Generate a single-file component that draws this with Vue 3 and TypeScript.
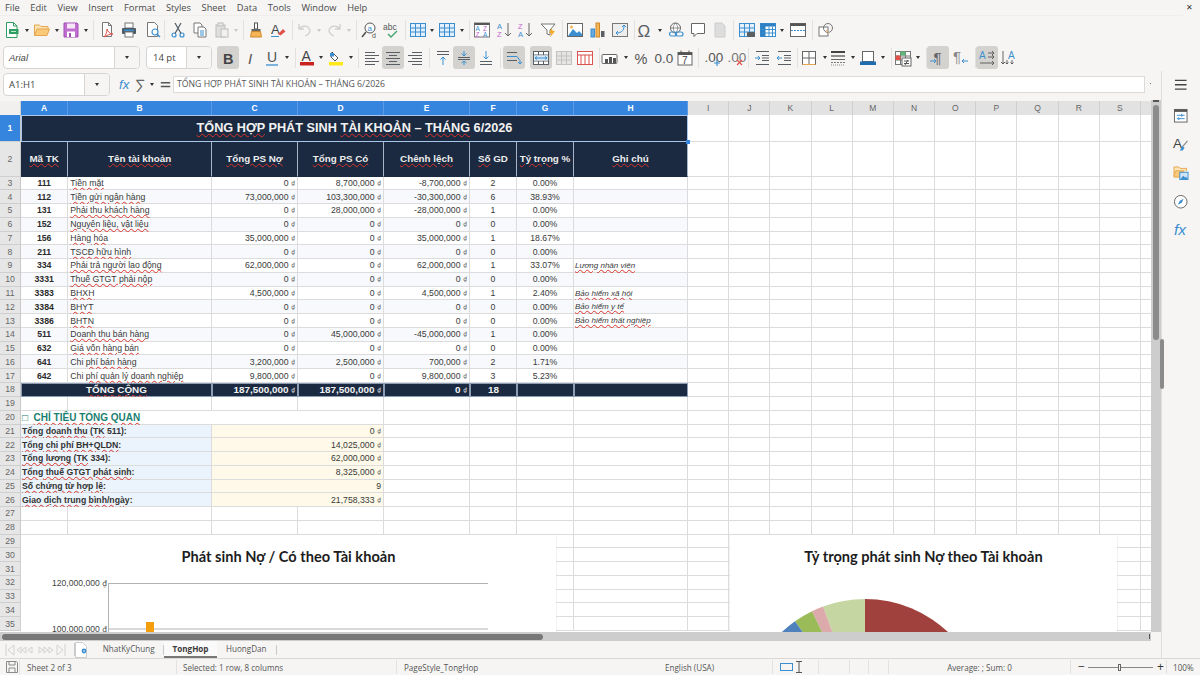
<script setup lang="ts">
import { h } from 'vue';

// "a |b| c" -> the part between bars gets the spell-check squiggle
const Sq = (props: { t: string }) =>
  h('span', null, props.t.split('|').map((p, i) => h('span', { class: i % 2 ? 'sp' : undefined }, p)));
Sq.props = ['t'];

const BL = '#3b8fd0';
const DK = '#5a5f66';
const txt = (x: number, y: number, s: number, fill: string, t: string, extra = '') =>
  `<text x="${x}" y="${y}" font-size="${s}" fill="${fill}" font-family="Liberation Sans, sans-serif" ${extra}>${t}</text>`;
const lines = (ys: number[], x1: number, x2: number, c = DK) =>
  `<path d="${ys.map((y) => `M${x1} ${y}H${x2}`).join('')}" stroke="${c}" fill="none"/>`;
const grid = (c: string, fill = '#fff') =>
  `<rect x=".5" y="1.5" width="15" height="13" fill="${fill}" stroke="${c}"/><path d="M.5 6h15M.5 10h15M5.5 1.5v13M10.5 1.5v13" stroke="${c}"/>`;

const icons: Record<string, string> = {
  new: `<path d="M2.5.5h7l3.5 3.5v11.5H2.5z" fill="#fff" stroke="#2f9e63"/><path d="M9.5.5V4H13" fill="none" stroke="#2f9e63"/><rect x="5" y="7" width="9.5" height="5" fill="#2f9e63"/><path d="M7 9.5h5" stroke="#bfe6cf"/>`,
  open: `<path d="M.5 13V3h5L7 4.5h7V7" fill="#fce3b5" stroke="#e5a64e"/><path d="M.5 13.5 3 7h12.5L13 13.5z" fill="#fbc97a" stroke="#e5a64e"/>`,
  save: `<path d="M1 1h13l1 1v13H1z" fill="#c06fd0" stroke="#a24fb4"/><rect x="4" y="1.5" width="8" height="5" fill="#f6e6f8"/><rect x="4" y="9.5" width="8" height="5.5" fill="#fff"/><rect x="6" y="11" width="2" height="4" fill="#a24fb4"/>`,
  pdf: `<path d="M3.5.5h6l3 3v11h-9z" fill="#fff" stroke="#777"/><path d="M9.5.5v3h3" fill="none" stroke="#777"/><path d="M5 15c2-2 3-5 3-8 1 3 3 5 6 5-3 0-6 1-9 3z" fill="none" stroke="#e0534a"/>`,
  print: `<rect x="4" y="1" width="8" height="5" fill="#fff" stroke="#777"/><rect x="1" y="6" width="14" height="6" rx="1" fill="#4d5a66"/><rect x="4" y="10" width="8" height="5" fill="#fff" stroke="#777"/><rect x="3" y="7.5" width="10" height="1.5" fill="${BL}"/>`,
  preview: `<path d="M2.5.5h7l3 3v11h-10z" fill="#fff" stroke="#777"/><circle cx="10" cy="10" r="3" fill="#fff" stroke="${BL}" stroke-width="1.2"/><path d="M12 12l3 3" stroke="${BL}" stroke-width="1.4"/>`,
  cut: `<circle cx="4" cy="13" r="2" fill="none" stroke="${BL}" stroke-width="1.2"/><circle cx="12" cy="13" r="2" fill="none" stroke="${BL}" stroke-width="1.2"/><path d="M5 11.5 11 1M11 11.5 5 1" stroke="#4d5a66" stroke-width="1.2"/>`,
  copy: `<path d="M2 1h6l2 2v8H2z" fill="#fff" stroke="#777"/><path d="M6 5h6l2 2v8H6z" fill="#fff" stroke="#777"/><path d="M8 9h4M8 11h4M8 13h4" stroke="${BL}"/>`,
  paste: `<g opacity=".5"><rect x="2" y="3" width="9" height="12" fill="#ccc" stroke="#888"/><rect x="4" y="1" width="5" height="3" fill="#ddd" stroke="#888"/><rect x="7" y="7" width="7" height="8" fill="#eee" stroke="#888"/></g>`,
  clone: `<rect x="6.5" y="1" width="3" height="6" fill="#fff" stroke="#555"/><rect x="3.5" y="7" width="9" height="2.5" fill="#666"/><path d="M3.5 9.5h9l1 5.5h-11z" fill="#f5b455" stroke="#d08a2a"/>`,
  clearfmt: `${txt(1, 12, 13, '#444', 'A')}<path d="M1 14.5h8" stroke="${BL}"/><path d="M8 12l5-5 2.5 2.5-5 4z" fill="#e0534a"/>`,
  undo: `<path d="M3 2v5h5M3 7c3-4 9-4 11 1 0 3-2 5-5 6" fill="none" stroke="#cfcfcf" stroke-width="1.3"/>`,
  redo: `<path d="M13 2v5H8M13 7C10 3 4 3 2 8c0 3 2 5 5 6" fill="none" stroke="#cfcfcf" stroke-width="1.3"/>`,
  find: `<circle cx="9" cy="6" r="5" fill="#fff" stroke="#555"/>${txt(6.5, 8.5, 8, BL, 'a')}<path d="M5 10 1 15" stroke="#555" stroke-width="1.6"/>${txt(11, 16, 7, '#555', 'd')}`,
  spell: `${txt(0, 8, 8.5, '#555', 'abc')}<path d="M5 12l3 3 6-6" stroke="#41a36b" stroke-width="1.4" fill="none"/>`,
  table: grid(BL, '#e3effa'),
  grid: grid(BL, '#e3effa'),
  sort: `<rect x=".5" y="1" width="15" height="14" fill="#fff" stroke="#777"/><rect x=".5" y="1" width="15" height="2" fill="#555"/>${txt(1.5, 9, 6.5, BL, 'A')}${txt(9, 9, 6.5, '#c564cc', 'Z')}${txt(1.5, 15, 6.5, '#c564cc', 'Z')}${txt(9, 15, 6.5, BL, 'A')}`,
  az: `${txt(0, 7, 7.5, BL, 'A')}${txt(0, 15, 7.5, '#c564cc', 'Z')}<path d="M11 1v13M8 11l3 3 3-3" stroke="#666" fill="none"/>`,
  za: `${txt(0, 7, 7.5, '#c564cc', 'Z')}${txt(0, 15, 7.5, BL, 'A')}<path d="M11 1v13M8 11l3 3 3-3" stroke="#666" fill="none"/>`,
  filter: `<path d="M1 2h14l-5 6v5l-3-1V8z" fill="#fff" stroke="#777"/><path d="M12 6 9 11h2.5L10 15.5 15 9h-2.5z" fill="#f5a623"/>`,
  image: `<rect x=".5" y="1.5" width="15" height="13" fill="#fff" stroke="#666"/><path d="M1 14 6 7l4 4 2-2 3 3v2z" fill="${BL}"/><circle cx="4.5" cy="5" r="1.5" fill="#f5b455"/>`,
  chart: `<rect x="1" y="7" width="3.5" height="8" fill="#6aa9dc" stroke="${BL}"/><rect x="6" y="1" width="3.5" height="14" fill="#f5b455" stroke="#d08a2a"/><rect x="11" y="9" width="3.5" height="6" fill="#5a5f66"/>`,
  pivot: `<rect x=".5" y="1.5" width="15" height="13" fill="#eee" stroke="#777"/><path d="M4 11c5 0 8-2 8-7M10 5l2-2 2 2M6 9l-2 2 2 2" fill="none" stroke="${BL}"/>`,
  omega: txt(0.5, 14.5, 17, '#5a5f66', 'Ω'),
  link: `<circle cx="7.5" cy="6" r="5" fill="#fff" stroke="#666"/><path d="M2.5 6h10M7.5 1c-3 3-3 7 0 10M7.5 1c3 3 3 7 0 10" fill="none" stroke="#666" stroke-width=".7"/><rect x="1.5" y="10" width="7" height="4" rx="2" fill="none" stroke="${BL}" stroke-width="1.2"/><rect x="7.5" y="10" width="7.5" height="4" rx="2" fill="none" stroke="${BL}" stroke-width="1.2"/>`,
  comment: `<path d="M1.5 1.5h13v10H7l-3 3v-3H1.5z" fill="#fff" stroke="#666"/>`,
  hdoc: `<path d="M3 1h7l3 3v11H3z" fill="#ddd" stroke="#ccc"/>`,
  parea: `${grid(BL, '#e6f0fa')}<rect x="8" y="10" width="8" height="5" rx="1" fill="#5a5f66"/>`,
  freeze: `<rect x=".5" y="1.5" width="15" height="13" fill="#fff" stroke="${BL}"/><rect x=".5" y="1.5" width="5" height="13" fill="#2f7fc4"/><rect x=".5" y="1.5" width="15" height="3" fill="#2f7fc4"/><path d="M.5 7.5h15M.5 11h15M9 4.5v10M12.5 4.5v10" stroke="${BL}"/>`,
  split: `<rect x=".5" y="1.5" width="15" height="13" fill="#fff" stroke="#666"/><rect x=".5" y="1.5" width="15" height="2.5" fill="#555"/><path d="M1 8.5h14" stroke="${BL}" stroke-dasharray="2 1"/>`,
  shapes: `<rect x="1" y="5" width="9" height="9" fill="#fff" stroke="#777"/><circle cx="10" cy="6" r="4.5" fill="none" stroke="#777"/><path d="M8 8l3 3" stroke="#e5a64e"/>`,
  bold: txt(3, 13.5, 14.5, '#444', 'B', 'font-weight="700"'),
  italic: txt(5, 13.5, 15, '#555', 'I', 'font-family="Liberation Serif" font-style="italic"'),
  under: `${txt(3, 12, 14, '#555', 'U')}<path d="M2 15h12" stroke="${BL}" stroke-width="1.3"/>`,
  fcolor: `${txt(2.5, 11, 14, '#444', 'A')}<rect x="1" y="12" width="14" height="3.5" fill="#c9211e"/>`,
  hcolor: `<path d="M4 2l6 6-3 3-4-4z" fill="#fff" stroke="#555"/><rect x="2" y="3" width="4" height="3.5" fill="${BL}"/><rect x="1" y="12" width="14" height="3.5" fill="#ffe81a"/>`,
  aleft: lines([2.5, 8.5, 14.5], 1, 11) + lines([5.5, 11.5], 1, 15),
  acenter: lines([2.5, 8.5, 14.5], 1, 15) + lines([5.5, 11.5], 4, 12),
  aright: lines([2.5, 8.5, 14.5], 5, 15) + lines([5.5, 11.5], 1, 15),
  vtop: lines([1.5, 4.5], 2, 14) + `<path d="M8 15V7M5.5 9.5 8 7l2.5 2.5" fill="none" stroke="${BL}"/>`,
  vmid: lines([7.5, 9.5], 2, 14) + `<path d="M8 1v5M5.5 3.5 8 6l2.5-2.5M8 15v-4M5.5 13 8 11l2.5 2" fill="none" stroke="${BL}"/>`,
  vbot: lines([11.5, 14.5], 2, 14) + `<path d="M8 1v8M5.5 6.5 8 9l2.5-2.5" fill="none" stroke="${BL}"/>`,
  wrap: lines([2.5, 6.5, 10.5], 1, 11) + `<path d="M2 6.5h9l3 4v3M12 12l2 2 2-2" fill="none" stroke="${BL}"/>`,
  merge: `<rect x=".5" y="1.5" width="15" height="13" fill="#fff" stroke="${DK}"/><path d="M.5 5h15M.5 11h15M5.5 1.5V5M10.5 1.5V5M5.5 11v3.5M10.5 11v3.5" stroke="${DK}"/><rect x="1" y="5.5" width="14" height="5" fill="#d8e9f8"/><path d="M2 8h12M2 8l2-1.5M2 8l2 1.5M14 8l-2-1.5M14 8l-2 1.5" stroke="${BL}" fill="none"/>`,
  unmerge: `<g opacity=".4">${grid('#777', '#ccc')}</g>`,
  tsplit: `<rect x=".5" y="1.5" width="15" height="13" fill="#fff" stroke="#d9534f"/><path d="M.5 5h15M4 5v9M8 5v9M12 5v9" stroke="#d9534f"/>`,
  curr: `<rect x="0" y="4.5" width="15" height="9" rx="1" fill="#fff" stroke="#666"/><rect x="3" y="9" width="3" height="4" fill="#555"/><rect x="7" y="7" width="3" height="6" fill="#555"/><rect x="11" y="8" width="3" height="5" fill="#555"/>`,
  pct: txt(1.5, 13.5, 14.5, '#555', '%'),
  num: txt(-.5, 13, 13.5, '#555', '0.0'),
  date: `<rect x="1" y="2.5" width="14" height="12.5" fill="#fff" stroke="#666"/><rect x="1" y="2.5" width="14" height="2.5" fill="#555"/><path d="M4 .5v3M12 .5v3" stroke="#555"/>${txt(5, 14, 10, '#444', '7')}`,
  adddec: `${txt(-.5, 12, 13.5, '#555', '.00')}<path d="M12 10v6M9 13h6" stroke="${BL}" stroke-width="1.2"/>`,
  deldec: `${txt(-.5, 12, 13.5, '#777', '.00')}<path d="M9 10l5 5M14 10l-5 5" stroke="#e0534a" stroke-width="1.2"/>`,
  indent: lines([1.5, 14.5], 2, 15) + lines([5.5, 8, 10.5], 8, 15) + `<path d="M1 8h5M4 6l2 2-2 2" fill="none" stroke="${BL}"/>`,
  outdent: lines([1.5, 14.5], 2, 15) + lines([5.5, 8, 10.5], 8, 15) + `<path d="M6 8H1M3 6 1 8l2 2" fill="none" stroke="${BL}"/>`,
  border: `<rect x="1.5" y="1.5" width="13" height="13" fill="#fff" stroke="#666"/><path d="M8 1.5v13M1.5 8h13" stroke="#666"/><path d="M1.5 14.5h13" stroke="#e5a64e"/>`,
  bstyle: `<path d="M1 2h14" stroke="#444" stroke-width="2"/><path d="M1 6h14" stroke="#555" stroke-width="1.3"/><path d="M1 9.5h14" stroke="#666"/><path d="M1 12.5h14" stroke="#777" stroke-dasharray="2 1"/><path d="M1 15h14" stroke="#888" stroke-dasharray="1 1"/>`,
  bcolor: `<rect x="2.5" y="1.5" width="11" height="10" fill="#fff" stroke="#666"/><rect x="0" y="11.5" width="16" height="3.5" fill="#1f6cb0"/>`,
  cond: `${grid('#777', '#fff')}<rect x=".5" y="5.5" width="5" height="4.5" fill="#e0534a"/><rect x="5.5" y="1.5" width="5" height="4" fill="#5fb878"/><rect x="7" y="8" width="9" height="8" fill="#fff" stroke="#666"/><path d="M9 11h5M9 13.5h5M10 15l3-5" stroke="#555"/>`,
  ltr: `${txt(3.5, 13, 15, '#666', '¶')}<path d="M0 11h6M4 9l2 2-2 2" fill="none" stroke="${BL}"/>`,
  rtl: `${txt(0, 12, 15, '#888', '¶')}<path d="M15 11H9M11 9l-2 2 2 2" fill="none" stroke="${BL}"/>`,
  hdir: `${txt(0, 9, 10, BL, 'A')}<path d="M9 3h6M13 1l2 2-2 2M9 7h6M13 5l2 2-2 2M1 13h14M13 11l2 2-2 2" fill="none" stroke="#555" stroke-width=".9"/>`,
  vdir: `${txt(7, 9, 10, BL, 'A')}<path d="M2 1v13M0 12l2 2 2-2M6 10v4M4.5 12.5 6 14l1.5-1.5M11 10v4M9.5 12.5 11 14l1.5-1.5" fill="none" stroke="#555" stroke-width=".9"/>`,
  fx: `${txt(0, 13, 14, BL, 'fx', 'font-family="Liberation Serif" font-style="italic"')}`,
  sum: txt(2, 14, 16, '#666', '∑'),
  eq: `<path d="M3 6h10M3 10h10" stroke="#555" stroke-width="1.6"/>`,
  menu: `<path d="M2 3.5h12M2 8h12M2 12.5h12" stroke="#444" stroke-width="1.3"/>`,
  props: `<rect x="1.5" y="1.5" width="13" height="13" fill="#fff" stroke="#666"/><rect x="1.5" y="1.5" width="13" height="2.5" fill="#555"/><path d="M4 7.5h8M4 11h8" stroke="${BL}"/><path d="M9 6v3M6 9.5v3" stroke="${BL}"/>`,
  styles: `${txt(0, 12, 14, '#444', 'A')}<path d="M15 5l-6 7" stroke="#888" stroke-width="1.2"/><path d="M9.5 10.5 7 15h3l2-3z" fill="${BL}"/>`,
  gallery: `<path d="M1 12V2h5l1.5 1.5H14V6" fill="#fce3b5" stroke="#e5a64e"/><path d="M1 12.5 2.5 6H11v6.5z" fill="#fbc97a" stroke="#e5a64e"/><rect x="7" y="7.5" width="8.5" height="7.5" fill="#cfe3f5" stroke="${BL}"/><path d="M7.5 15l3-4 2 2 1-1 2 3z" fill="${BL}"/>`,
  nav: `<circle cx="8" cy="8" r="6.5" fill="#fff" stroke="#666"/><path d="M11 5 9 9 5 11l2-4z" fill="${BL}"/>`,
  fxs: txt(1, 13.5, 16, BL, 'fx', 'font-family="Liberation Serif" font-style="italic"'),
};

type Tool = [string, number, number?];
const widths: Record<string, number> = { '^': 8, '~': 8, '|': 1 };

// x is the centre of the item in the bar, turned into a flow gap from the previous item
function place(items: Tool[], start: number) {
  let right = start;
  return items.map(([name, x, active]) => {
    const w = widths[name] ?? 22;
    const gap = x - w / 2 - right;
    right = x + w / 2;
    return { name, active: !!active, w, gap };
  });
}

const bar1 = place([
  ['new', 12], ['^', 27], ['open', 42], ['^', 57], ['save', 71], ['^', 86], ['|', 93],
  ['pdf', 107], ['print', 129], ['preview', 153], ['|', 164], ['cut', 178], ['copy', 200],
  ['paste', 222], ['~', 236], ['|', 243], ['clone', 256], ['clearfmt', 278], ['|', 292],
  ['undo', 304], ['~', 319], ['redo', 335], ['~', 349], ['|', 356], ['find', 369], ['spell', 391],
  ['|', 405], ['table', 418], ['^', 432], ['grid', 447], ['^', 462], ['|', 469], ['sort', 482],
  ['az', 505], ['za', 526], ['filter', 548], ['|', 562], ['image', 575], ['chart', 598],
  ['pivot', 620], ['|', 634], ['omega', 645], ['^', 660], ['link', 676], ['comment', 698],
  ['hdoc', 720], ['|', 733], ['parea', 747], ['freeze', 768], ['^', 782], ['split', 798],
  ['|', 812], ['shapes', 826],
], 0);

const bar2 = place([
  ['bold', 228, 1], ['italic', 251], ['under', 272], ['^', 287], ['|', 295], ['fcolor', 307],
  ['^', 321], ['hcolor', 336], ['^', 351], ['|', 358], ['aleft', 372], ['acenter', 393, 1],
  ['aright', 415], ['|', 429], ['vtop', 443], ['vmid', 464, 1], ['vbot', 486], ['|', 500],
  ['wrap', 514, 1], ['merge', 541, 1], ['unmerge', 564], ['tsplit', 585], ['|', 599],
  ['curr', 610], ['^', 626], ['pct', 641], ['num', 663], ['date', 685], ['|', 698],
  ['adddec', 713], ['deldec', 736], ['|', 748], ['indent', 762], ['outdent', 784], ['|', 797],
  ['border', 809], ['^', 825], ['bstyle', 838], ['^', 853], ['bcolor', 868], ['^', 883],
  ['|', 891], ['cond', 903], ['^', 918], ['|', 926], ['ltr', 938, 1], ['rtl', 961], ['|', 975],
  ['hdir', 987, 1], ['vdir', 1009],
], 212);

const menus = ['File', 'Edit', 'View', 'Insert', 'Format', 'Styles', 'Sheet', 'Data', 'Tools', 'Window', 'Help'];
const sideIcons = ['props', 'styles', 'gallery', 'nav', 'fxs'];
const letters = 'ABCDEFGHIJKLMNOPQRS'.split('');
const headers = ['|Mã TK|', '|Tên tài khoản|', '|Tổng PS Nợ|', '|Tổng PS Có|', '|Chênh lệch|', '|Số| GD', '|Tỷ trọng| %', '|Ghi chú|'];

type Row = [string, string, string, string, string, string, string, string?];
const accounts: Row[] = [
  ['111', '|Tiền mặt|', '0', '8,700,000', '-8,700,000', '2', '0.00%'],
  ['112', '|Tiền gửi ngân hàng|', '73,000,000', '103,300,000', '-30,300,000', '6', '38.93%'],
  ['131', '|Phải thu khách hàng|', '0', '28,000,000', '-28,000,000', '1', '0.00%'],
  ['152', '|Nguyên liệu, vật liệu|', '0', '0', '0', '0', '0.00%'],
  ['156', '|Hàng hóa|', '35,000,000', '0', '35,000,000', '1', '18.67%'],
  ['211', '|TSCĐ hữu hình|', '0', '0', '0', '0', '0.00%'],
  ['334', '|Phải trả người lao động|', '62,000,000', '0', '62,000,000', '1', '33.07%', '|Lương nhân viên|'],
  ['3331', '|Thuế GTGT phải nộp|', '0', '0', '0', '0', '0.00%'],
  ['3383', '|BHXH|', '4,500,000', '0', '4,500,000', '1', '2.40%', '|Bảo hiểm xã hội|'],
  ['3384', '|BHYT|', '0', '0', '0', '0', '0.00%', '|Bảo hiểm y tế|'],
  ['3386', '|BHTN|', '0', '0', '0', '0', '0.00%', '|Bảo hiểm thất nghiệp|'],
  ['511', '|Doanh thu bán hàng|', '0', '45,000,000', '-45,000,000', '1', '0.00%'],
  ['632', '|Giá vốn hàng bán|', '0', '0', '0', '0', '0.00%'],
  ['641', 'Chi |phí bán hàng|', '3,200,000', '2,500,000', '700,000', '2', '1.71%'],
  ['642', 'Chi |phí quản lý doanh nghiệp|', '9,800,000', '0', '9,800,000', '3', '5.23%'],
];

const kpis: [string, string, boolean][] = [
  ['|Tổng doanh thu| (|TK| 511):', '0', true],
  ['|Tổng chi phí BH+QLDN|:', '14,025,000', true],
  ['|Tổng lương| (|TK| 334):', '62,000,000', true],
  ['|Tổng thuế GTGT phát sinh|:', '8,325,000', true],
  ['|Số chứng từ hợp lệ|:', '9', false],
  ['|Giao dịch trung bình/ngày|:', '21,758,333', true],
];

const statusCells = [
  { w: 20, icon: true },
  { w: 157, text: 'Sheet 2 of 3', pad: 7 },
  { w: 220, text: 'Selected: 1 row, 8 columns', pad: 6 },
  { w: 251, text: 'PageStyle_TongHop', pad: 7 },
  { w: 125, text: 'English (USA)', pad: 17 },
];
</script>

<template>
  <div class="app">
    <nav class="menubar">
      <span v-for="m in menus" :key="m">{{ m }}</span>
      <span class="close">✕</span>
    </nav>

    <div class="toolbar tb1">
      <template v-for="(t, i) in bar1" :key="i">
        <i v-if="t.name === '|'" class="sep" :style="{ marginLeft: t.gap + 'px' }"></i>
        <i v-else-if="t.name === '^' || t.name === '~'" class="caret" :class="{ off: t.name === '~' }" :style="{ marginLeft: t.gap + 'px' }"></i>
        <span v-else class="tool" :style="{ marginLeft: t.gap + 'px' }">
          <svg viewBox="0 0 16 16" v-html="icons[t.name]"></svg>
        </span>
      </template>
    </div>

    <div class="toolbar tb2">
      <div class="combo font"><em>Arial</em><b class="drop"><i class="caret"></i></b></div>
      <div class="combo size"><span>14 pt</span><b class="drop"><i class="caret"></i></b></div>
      <template v-for="(t, i) in bar2" :key="i">
        <i v-if="t.name === '|'" class="sep" :style="{ marginLeft: t.gap + 'px' }"></i>
        <i v-else-if="t.name === '^'" class="caret" :style="{ marginLeft: t.gap + 'px' }"></i>
        <span v-else class="tool" :class="{ active: t.active }" :style="{ marginLeft: t.gap + 'px' }">
          <svg viewBox="0 0 16 16" v-html="icons[t.name]"></svg>
        </span>
      </template>
    </div>

    <div class="workspace">
      <div class="main">
        <div class="formula">
          <div class="combo namebox"><span>A1:H1</span><b class="drop"><i class="caret"></i></b></div>
          <svg class="fx" viewBox="0 0 16 16" v-html="icons.fx"></svg>
          <svg class="sum" viewBox="0 0 16 16" v-html="icons.sum"></svg>
          <i class="caret"></i>
          <svg class="eq" viewBox="0 0 16 16" v-html="icons.eq"></svg>
          <div class="input">TỔNG HỢP PHÁT SINH TÀI KHOẢN – THÁNG 6/2026</div>
          <i class="caret"></i>
        </div>

        <div class="sheet-wrap">
          <div class="sheet">
            <div class="row letters">
              <div class="corner"></div>
              <div v-for="(l, i) in letters" :key="l" class="letter" :class="{ sel: i < 8 }">{{ l }}</div>
              <div class="letter"></div>
            </div>

            <div class="row r1">
              <div class="rh sel">1</div>
              <div class="title"><Sq t="|TỔNG HỢP| PHÁT SINH |TÀI KHOẢN| – |THÁNG| 6/2026" /><i class="handle"></i></div>
              <div v-for="n in 12" :key="n" class="c"></div>
            </div>

            <div class="row r2">
              <div class="rh">2</div>
              <div v-for="t in headers" :key="t" class="th"><Sq :t="t" /></div>
              <div v-for="n in 12" :key="n" class="c"></div>
            </div>

            <div v-for="(a, i) in accounts" :key="a[0]" class="row rd" :class="{ alt: i % 2 === 1 }">
              <div class="rh">{{ i + 3 }}</div>
              <div class="c code">{{ a[0] }}</div>
              <div class="c name"><Sq :t="a[1]" /></div>
              <div v-for="k in [2, 3, 4]" :key="k" class="c num">{{ a[k] }}<small>₫</small></div>
              <div class="c mid">{{ a[5] }}</div>
              <div class="c mid">{{ a[6] }}</div>
              <div class="c note"><Sq v-if="a[7]" :t="a[7]" /></div>
              <div v-for="n in 12" :key="n" class="c blank"></div>
            </div>

            <div class="row total">
              <div class="rh">18</div>
              <div class="tc span2 mid"><Sq t="|TỔNG CỘNG|" /></div>
              <div class="tc num">187,500,000<small>₫</small></div>
              <div class="tc num">187,500,000<small>₫</small></div>
              <div class="tc num">0<small>₫</small></div>
              <div class="tc mid">18</div>
              <div class="tc"></div>
              <div class="tc"></div>
              <div v-for="n in 12" :key="n" class="c"></div>
            </div>

            <div class="row rd">
              <div class="rh">19</div>
              <div v-for="n in 20" :key="n" class="c"></div>
            </div>

            <div class="row rd">
              <div class="rh">20</div>
              <div class="c section span4"><span>□&nbsp; <Sq t="|CHỈ TIÊU TỔNG QUAN|" /></span></div>
              <div v-for="n in 16" :key="n" class="c"></div>
            </div>

            <div v-for="(k, i) in kpis" :key="k[0]" class="row rd">
              <div class="rh">{{ i + 21 }}</div>
              <div class="c kl span2"><Sq :t="k[0]" /></div>
              <div class="c kv span2 num">{{ k[1] }}<small v-if="k[2]">₫</small></div>
              <div v-for="n in 16" :key="n" class="c"></div>
            </div>

            <div v-for="r in [27, 28, 29, 30, 31, 32, 33, 34, 35]" :key="r" class="row rd">
              <div class="rh">{{ r }}</div>
              <div v-for="n in 20" :key="n" class="c"></div>
            </div>
          </div>

          <!-- charts float over the cells -->
          <div class="chart chart-bar">
            <h3>Phát sinh Nợ / Có theo Tài khoản</h3>
            <svg width="535" height="100" viewBox="0 0 535 100">
              <path d="M87.5 48V98M87 48.5H467M87 94H467" stroke="#b3b3b3" fill="none" />
              <text x="86" y="51" text-anchor="end" class="axis">120,000,000 <tspan class="dong">₫</tspan></text>
              <text x="86" y="96.5" text-anchor="end" class="axis">100,000,000 <tspan class="dong">₫</tspan></text>
              <rect x="125" y="87" width="8" height="13" fill="#f59e0b" />
            </svg>
          </div>

          <div class="chart chart-pie">
            <h3>Tỷ trọng phát sinh Nợ theo Tài khoản</h3>
            <svg width="387" height="100" viewBox="0 0 387 100">
              <g transform="translate(0 -1)">
                <path d="M135 186V65A121 121 0 0 1 256 186z" fill="#a0413e" />
                <path d="M135 186 93 72.5A121 121 0 0 1 135 65z" fill="#c5d6a3" />
                <path d="M135 186 82 77.2A121 121 0 0 1 93 72.5z" fill="#dcaaab" />
                <path d="M135 186 65 87.3A121 121 0 0 1 82 77.2z" fill="#9bbb59" />
                <path d="M135 186 45 105A121 121 0 0 1 65 87.3z" fill="#4f81bd" />
              </g>
            </svg>
          </div>
        </div>

        <div class="hscroll"><div class="hthumb"></div><i class="htick"></i></div>

        <div class="tabs">
          <svg class="tabnav" viewBox="0 0 62 14" width="62" height="14">
            <g fill="none" stroke="#d2d2d2">
              <path d="M1 1v12M9 2 3 7l6 5zM16 4l-4 3 4 3zM21 4l-4 3 4 3zM27 4l-4 3 4 3zM34 4l4 3-4 3zM39 4l4 3-4 3zM44 4l4 3-4 3zM52 2l6 5-6 5zM60 1v12" />
            </g>
          </svg>
          <i class="tabsep first"></i>
          <svg class="newtab" viewBox="0 0 12 16" width="12" height="16">
            <path d="M.5.5h7l4 4v11H.5z" fill="#fff" stroke="#ccc" />
            <circle cx="9" cy="9" r="2.4" fill="#3b8fd0" />
            <circle cx="9" cy="9" r=".8" fill="#fff" />
          </svg>
          <span class="tab t1">NhatKyChung</span>
          <i class="tabsep"></i>
          <span class="tab on">TongHop</span>
          <span class="tab t3">HuongDan</span>
          <i class="tabsep"></i>
        </div>
      </div>

      <div class="vscroll"><i class="vstub"></i><div class="vthumb"></div></div>

      <aside class="sidebar">
        <i class="grip"></i>
        <svg class="menu-ic" viewBox="0 0 16 16" v-html="icons.menu"></svg>
        <svg v-for="s in sideIcons" :key="s" viewBox="0 0 16 16" v-html="icons[s]"></svg>
      </aside>
    </div>

    <footer class="status">
      <div v-for="(c, i) in statusCells" :key="i" class="cell" :class="{ nosep: i === 3 }" :style="{ width: c.w + 'px', paddingLeft: (c.pad ?? 0) + 'px' }">
        <svg v-if="c.icon" class="disk" viewBox="0 0 12 12" width="12" height="12">
          <path d="M.5.5h10l1 1v10H.5z" fill="none" stroke="#8a8a8a" />
          <path d="M3 .5v3.5h6V.5M3 11.5V7h6v4.5" fill="none" stroke="#8a8a8a" />
        </svg>
        <template v-else>{{ c.text }}</template>
      </div>
      <div class="cell sel-mode">
        <i class="rect"></i>
        <svg viewBox="0 0 6 12" width="6" height="12"><path d="M0 .5h6M0 11.5h6M3 .5v11" stroke="#555" fill="none" /></svg>
      </div>
      <div class="cell w31"></div>
      <div class="cell w19"></div>
      <div class="cell w20"></div>
      <div class="cell sum-cell">Average: ; Sum: 0</div>
      <div class="cell zoom">
        <span class="zbtn">−</span>
        <span class="slider"><i></i></span>
        <span class="zbtn">+</span>
      </div>
      <div class="cell pct">100%</div>
    </footer>
  </div>
</template>

<style scoped>
.app {
  width: 1200px;
  height: 675px;
  display: flex;
  flex-direction: column;
  overflow: hidden;
  background: #f6f5f4;
  color: #4a4a4a;
  font-family: "Open Sans", "Noto Sans", sans-serif;
  font-size: 9px;
}

.menubar {
  height: 15px;
  display: flex;
  align-items: center;
  gap: 10.6px;
  padding-left: 5px;
  font-size: 9.3px;
  position: relative;
}
.close {
  position: absolute;
  right: 7px;
  top: 1px;
  font-size: 8px;
  color: #333;
}

.toolbar {
  display: flex;
  align-items: center;
  flex: none;
  box-sizing: border-box;
}
.tb1 {
  height: 29px;
  border-top: 1px solid #efeeed;
  margin-right: 17px;
}
.tb2 {
  height: 27px;
  padding-left: 3px;
}
.tool {
  width: 22px;
  height: 23px;
  flex: none;
  display: flex;
  align-items: center;
  justify-content: center;
  border-radius: 3px;
}
.tool svg {
  width: 16px;
  height: 16px;
  overflow: visible;
}
.tool.active {
  background: #d4d2cf;
}
.sep {
  width: 1px;
  height: 20px;
  flex: none;
  background: #e2e1df;
}
.caret {
  display: block;
  width: 8px;
  height: 3px;
  flex: none;
  position: relative;
}
.caret::before {
  content: "";
  position: absolute;
  left: 1.5px;
  top: 0;
  border: 2.5px solid transparent;
  border-top: 3px solid #333;
  border-bottom: 0;
}
.caret.off::before {
  border-top-color: #c9c9c9;
}

.combo {
  height: 23px;
  display: flex;
  align-items: center;
  flex: none;
  background: #fff;
  border: 1px solid #d6d5d3;
  border-radius: 4px;
  box-sizing: border-box;
  font-size: 9.5px;
  color: #444;
  padding-left: 5px;
}
.combo > em,
.combo > span {
  flex: 1;
}
.drop {
  width: 24px;
  height: 100%;
  display: flex;
  align-items: center;
  justify-content: center;
  background: #f6f5f4;
  border-left: 1px solid #d6d5d3;
  border-radius: 0 3px 3px 0;
}
.font {
  width: 137px;
  font-family: "Liberation Sans", sans-serif;
}
.size {
  width: 66px;
  margin-left: 6px;
  padding-left: 6px;
}

.workspace {
  flex: 1;
  min-height: 0;
  display: flex;
}
.main {
  width: 1151px;
  display: flex;
  flex-direction: column;
  flex: none;
}

.formula {
  height: 29.5px;
  display: flex;
  align-items: center;
  padding-left: 3px;
  padding-bottom: 3px;
  box-sizing: border-box;
  flex: none;
}
.namebox {
  width: 107px;
}
.formula svg {
  width: 15px;
  height: 15px;
  flex: none;
}
.fx {
  margin-left: 9px;
}
.sum {
  margin-left: -1px;
}
.eq {
  margin-left: 2px;
}
.input {
  width: 972px;
  height: 17px;
  background: #fff;
  border: 1px solid #dcdbd9;
  box-sizing: border-box;
  padding-left: 3px;
  line-height: 15px;
  font-size: 8.7px;
  color: #555;
  flex: none;
  margin-right: 3px;
}

.sheet-wrap {
  position: relative;
  height: 531.5px;
  overflow: hidden;
  flex: none;
  background: #fff;
  box-shadow: inset 0 1px 0 #d9d9d9;
}
.sheet {
  font-family: "Liberation Sans", sans-serif;
  font-size: 8.7px;
  color: #3a3a3a;
}
.row {
  display: grid;
  grid-template-columns: 21px 47.3px 143.7px 86px 86px 86px 47px 57px 114px repeat(12, 41.2px);
  overflow: hidden;
}
.row > div {
  box-sizing: border-box;
  min-width: 0;
  display: flex;
  align-items: center;
  white-space: nowrap;
}
.letters {
  height: 14px;
}
.corner {
  background: #f1f0ef;
  border-right: 1px solid #d4d4d4;
}
.letter {
  justify-content: center;
  background: #e2e2e2;
  border-right: 1px solid #cfcfcf;
  color: #666;
  font-size: 8.5px;
}
.letter.sel {
  background: #3584dd;
  border-right-color: #5b9ae4;
  color: #fff;
  font-weight: 700;
}
.r1 {
  height: 27px;
  overflow: visible;
}
.r2 {
  height: 35px;
}
.rd {
  height: 13.78px;
}
.total {
  height: 14px;
}
.rh {
  justify-content: center;
  background: #e6e6e6;
  border-right: 1px solid #c9c9c9;
  border-bottom: 1px solid #cfcfcf;
  color: #666;
  font-size: 8.7px;
}
.rh.sel {
  background: #3584dd;
  color: #fff;
  font-weight: 700;
}
.c {
  border-right: 1px solid #dcdcdc;
  border-bottom: 1px solid #dcdcdc;
}
.title {
  grid-column: span 8;
  position: relative;
  justify-content: center;
  background: #1b2a41;
  border: 1px solid #a9c7ea;
  color: #f2f2f2;
  font-size: 12.7px;
  font-weight: 700;
}
.handle {
  position: absolute;
  right: -3px;
  bottom: -3px;
  width: 4px;
  height: 4px;
  background: #3584dd;
  z-index: 2;
}
.th {
  justify-content: center;
  background: #1b2a41;
  border-right: 1px solid #a9b5c6;
  border-bottom: 1px solid #1b2a41;
  color: #ededed;
  font-size: 9.8px;
  font-weight: 700;
}
.alt .c:not(.blank) {
  background: #f7f9fc;
}
.code {
  justify-content: center;
  font-weight: 700;
  color: #2b2b2b;
}
.name {
  padding-left: 2px;
}
.num {
  justify-content: flex-end;
  padding-right: 2px;
}
.num small {
  font-family: "DejaVu Sans", sans-serif;
  font-size: 5.8px;
  font-weight: 400;
  width: 4px;
  margin-left: 2.5px;
  color: #555;
  text-align: right;
}
.mid {
  justify-content: center;
}
.note {
  padding-left: 1px;
  font-size: 8px;
  font-style: italic;
}
.span2 {
  grid-column: span 2;
}
.span4 {
  grid-column: span 4;
}
.tc {
  background: #1b2a41;
  border: 1px solid #8c9cb3;
  color: #f2f2f2;
  font-size: 9.9px;
  font-weight: 700;
}
.tc small {
  color: #f2f2f2;
}
.section {
  padding-left: 1px;
  color: #1a7f72;
  font-size: 10px;
  font-weight: 700;
}
.kl {
  background: #ebf3fc;
  padding-left: 1px;
  font-weight: 700;
  color: #333;
}
.kv {
  background: #fef9e8;
}

.chart {
  position: absolute;
  top: 434.5px;
  height: 200px;
  background: #fff;
  box-shadow: 0 0 2px #ddd;
}
.chart h3 {
  margin: 0;
  height: 46px;
  text-align: center;
  font-family: Lato, sans-serif;
  font-size: 14.6px;
  line-height: 44px;
  font-weight: 700;
  color: #1c1c1c;
}
.chart svg {
  display: block;
  margin-top: -46px;
  position: relative;
}
.chart-bar {
  left: 21px;
  width: 535px;
}
.chart-pie {
  left: 730px;
  width: 387px;
}
.axis {
  font-family: "Liberation Sans", sans-serif;
  font-size: 8.6px;
  fill: #444;
}
.dong {
  font-family: "DejaVu Sans", sans-serif;
  font-size: 7.5px;
}

.hscroll {
  height: 9px;
  background: #cdcdcd;
  position: relative;
  flex: none;
}
.hthumb {
  position: absolute;
  left: 2px;
  top: 1.5px;
  width: 541px;
  height: 6px;
  border-radius: 3px;
  background: #777;
}
.htick {
  position: absolute;
  right: 1px;
  top: 2px;
  width: 1px;
  height: 5px;
  background: #555;
}

.tabs {
  flex: 1;
  display: flex;
  align-items: center;
  padding-left: 5px;
  font-size: 8.1px;
  color: #555;
}
.tabsep {
  width: 1px;
  height: 10px;
  background: #c9c9c9;
}
.tabsep.first {
  height: 13px;
  margin-left: 7px;
}
.tab {
  height: 17px;
  line-height: 16px;
  box-sizing: border-box;
  flex: none;
}
.t1 {
  margin-left: 15.7px;
  margin-right: 8.5px;
}
.t3 {
  margin-left: 9px;
  margin-right: 9.5px;
}
.tab.on {
  width: 53px;
  text-align: center;
  background: #fbfafa;
  border-bottom: 2px solid #777;
  color: #3a3a3a;
  font-weight: 700;
}

.vscroll {
  width: 10px;
  position: relative;
  background: linear-gradient(#f6f5f4 29.5px, #cdcdcd 29.5px, #cdcdcd 561px, #f6f5f4 561px);
  flex: none;
}
.vstub {
  position: absolute;
  left: 2px;
  top: 29px;
  width: 6px;
  height: 2px;
  background: #555;
}
.vthumb {
  position: absolute;
  left: 2px;
  top: 34px;
  width: 6px;
  height: 235px;
  border-radius: 3px;
  background: #8b8b8b;
}

.sidebar {
  width: 39px;
  flex: none;
  position: relative;
  border-left: 1px solid #dededc;
  box-sizing: border-box;
  display: flex;
  flex-direction: column;
  align-items: center;
  gap: 13.2px;
  padding-top: 6px;
}
.sidebar svg {
  width: 15.5px;
  height: 15.5px;
  flex: none;
  overflow: visible;
}
.sidebar .menu-ic {
  margin-bottom: 2px;
}
.grip {
  position: absolute;
  left: -2px;
  top: 268px;
  width: 4px;
  height: 50px;
  border-radius: 2px;
  background: #8b8b8b;
}

.status {
  height: 17px;
  flex: none;
  display: flex;
  align-items: center;
  border-top: 1px solid #d9d8d6;
  box-sizing: border-box;
  font-size: 8.1px;
  color: #555;
}
.cell {
  height: 14px;
  display: flex;
  align-items: center;
  flex: none;
  box-sizing: border-box;
  border-right: 1px solid #e3e2e0;
  white-space: nowrap;
}
.cell.nosep {
  border-right: 0;
}
.disk {
  margin-left: 6px;
}
.sel-mode {
  width: 46px;
  padding-left: 7px;
  gap: 3px;
}
.rect {
  width: 11px;
  height: 6px;
  border: 1px solid #3b8fd0;
}
.w31 {
  width: 31px;
}
.w19 {
  width: 19px;
}
.w20 {
  width: 20px;
}
.sum-cell {
  width: 182px;
  justify-content: center;
}
.zoom {
  width: 96px;
  padding-left: 7px;
  gap: 4px;
}
.zbtn {
  font-size: 12px;
  color: #333;
  width: 6px;
  text-align: center;
  line-height: 12px;
}
.slider {
  width: 65px;
  height: 1px;
  background: #888;
  position: relative;
}
.slider i {
  position: absolute;
  left: 30px;
  top: -3px;
  width: 3px;
  height: 7px;
  background: #f6f5f4;
  border: 1px solid #666;
  box-sizing: border-box;
}
.pct {
  border-right: 0;
  padding-left: 6px;
}
</style>

<style>
html,
body {
  margin: 0;
}
.sp {
  text-decoration: underline wavy #d8342c;
  text-decoration-thickness: 0.7px;
  text-underline-offset: 0.5px;
}
</style>
